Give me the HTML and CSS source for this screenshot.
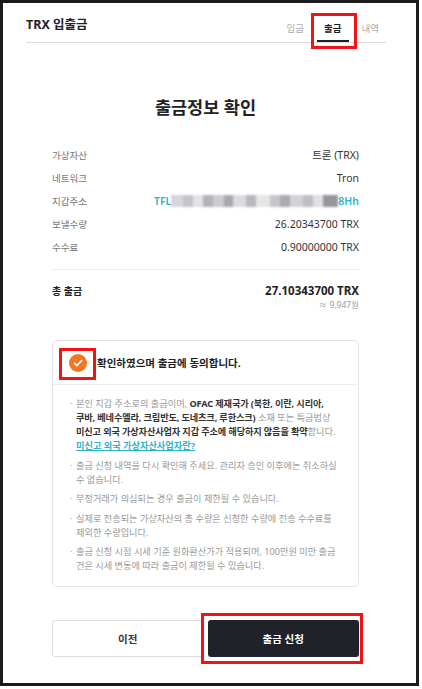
FILE: index.html
```html
<!DOCTYPE html>
<html lang="ko">
<head>
    <meta charset="UTF-8">
    <meta name="viewport" content="width=device-width, initial-scale=1.0">
    <title>TRX 입출금</title>
    <link rel="stylesheet" href="styles.css">
</head>
<body>

    <div class="frame">
        <!-- Header with tabs -->
        <header class="top">
            <h1 class="title">TRX 입출금</h1>
            <nav class="tabs">
                <a class="tab">입금</a>
                <a class="tab active">출금<span class="mark"></span></a>
                <a class="tab">내역</a>
            </nav>
        </header>

        <main class="confirm">
            <h2 class="heading">출금정보 확인</h2>

            <div class="rows">
                <div class="row"><span class="label">가상자산</span><span class="value">트론 (TRX)</span></div>
                <div class="row"><span class="label">네트워크</span><span class="value">Tron</span></div>
                <div class="row"><span class="label">지갑주소</span><span class="value addr">TFL<span class="blur"></span>8Hh</span></div>
                <div class="row"><span class="label">보낼수량</span><span class="value">26.20343700 TRX</span></div>
                <div class="row"><span class="label">수수료</span><span class="value">0.90000000 TRX</span></div>
            </div>

            <div class="total">
                <div class="total-row"><span>총 출금</span><span class="total-amount">27.10343700 TRX</span></div>
                <p class="krw">≈ 9,947원</p>
            </div>

            <!-- Agreement box -->
            <div class="agree">
                <div class="agree-head">
                    <span class="check">
                        <svg width="18" height="18" viewBox="0 0 18 18">
                            <circle cx="9" cy="9" r="9" fill="#f47522"/>
                            <polyline points="5.4,9.2 7.9,11.6 12.6,6.7" fill="none" stroke="#fff" stroke-width="1.7" stroke-linecap="round" stroke-linejoin="round"/>
                        </svg>
                        <span class="mark"></span>
                    </span>
                    확인하였으며 출금에 동의합니다.
                </div>
                <ul class="notes">
                    <li>본인 지갑 주소로의 출금이며, <b>OFAC 제재국가 (북한, 이란, 시리아,<br>쿠바, 베네수엘라, 크림반도, 도네츠크, 루한스크)</b> 소재 또는 특금법상<br><b>미신고 외국 가상자산사업자 지갑 주소에 해당하지 않음을 확약</b>합니다.
                        <a class="link">미신고 외국 가상자산사업자란?</a></li>
                    <li>출금 신청 내역을 다시 확인해 주세요. 관리자 승인 이후에는 취소하실<br>수 없습니다.</li>
                    <li>부정거래가 의심되는 경우 출금이 제한될 수 있습니다.</li>
                    <li>실제로 전송되는 가상자산의 총 수량은 신청한 수량에 전송 수수료를<br>제외한 수량입니다.</li>
                    <li>출금 신청 시점 시세 기준 원화환산가가 적용되며, 100만원 미만 출금<br>건은 시세 변동에 따라 출금이 제한될 수 있습니다.</li>
                </ul>
            </div>

            <div class="actions">
                <button class="btn btn-prev">이전</button>
                <button class="btn btn-submit">출금 신청<span class="mark"></span></button>
            </div>
        </main>
    </div>

</body>
</html>
```

FILE: styles.css
```css
body {
    margin: 0;
    background-color: #fff;
    font-family: "Noto Sans", "Noto Sans CJK KR", sans-serif;
    color: #333;
    word-break: keep-all;
}

/* Outer window frame */
.frame {
    position: relative;
    box-sizing: border-box;
    width: 419px;
    height: 686px;
    border: 3px solid #1b1b1b;
    padding: 0 30px 0 23px;
    background-color: #fff;
}

/* Red annotation boxes */
.mark {
    position: absolute;
    border: 3px solid #f01414;
    pointer-events: none;
}

/* Header */
.top {
    display: flex;
    justify-content: space-between;
    height: 39px;
    border-bottom: 1px solid #dcdcdc;
}

.title {
    margin: 13px 0 0;
    font-size: 12.5px;
    line-height: 18px;
    font-weight: 700;
    color: #1f2329;
}

.tabs {
    display: flex;
    align-self: flex-end;
    gap: 6px;
}

.tab {
    position: relative;
    padding: 0 7px 4px;
    font-size: 9.5px;
    line-height: 14px;
    color: #aaa;
    border-bottom: 2px solid transparent;
}

.tab.active {
    color: #222;
    font-weight: 700;
    border-bottom-color: #222;
}

.tab .mark {
    left: -6px;
    right: -8px;
    top: -9px;
    bottom: -9px;
}

/* Confirm section */
.confirm {
    padding: 0 27px 0 26px;
}

.heading {
    margin: 52px 0 24px;
    text-align: center;
    font-size: 17.5px;
    line-height: 24px;
    font-weight: 700;
    color: #222;
}

.rows {
    padding-bottom: 11px;
    border-bottom: 1px solid #ececec;
}

.row {
    display: flex;
    justify-content: space-between;
    align-items: center;
    height: 23px;
}

.label {
    font-size: 9.5px;
    color: #777;
}

.value {
    font-size: 10.5px;
    color: #333;
}

.addr {
    display: flex;
    align-items: center;
    color: #2fb3c6;
    font-weight: 600;
}

.blur {
    display: inline-block;
    width: 167px;
    height: 12px;
    filter: blur(0.9px);
    background: linear-gradient(90deg, #d6d7da 0 7%, #c4c5c9 7% 13%, #e3e3e6 13% 19%, #b1b3b8 19% 25%, #cbccd0 25% 32%, #a7a9ae 32% 37%, #dadbde 37% 45%, #b8b9be 45% 51%, #e6e6e8 51% 59%, #c5c6ca 59% 65%, #a9abb0 65% 71%, #d1d2d5 71% 79%, #bdbec2 79% 85%, #e1e1e4 85% 91%, #95979c 91% 100%);
}

/* Total */
.total {
    margin-top: 13px;
}

.total-row {
    display: flex;
    justify-content: space-between;
    align-items: center;
    line-height: 16px;
    font-size: 10px;
    font-weight: 700;
    color: #222;
}

.total-amount {
    font-size: 11.5px;
}

.krw {
    margin: 0;
    text-align: right;
    font-size: 8.5px;
    line-height: 12px;
    color: #999;
}

/* Agreement box */
.agree {
    margin-top: 29px;
    border: 1px solid #e4e4e4;
    border-radius: 5px;
}

.agree-head {
    display: flex;
    align-items: center;
    gap: 10px;
    height: 43px;
    padding-left: 16px;
    border-bottom: 1px solid #eee;
    font-size: 10.5px;
    font-weight: 700;
    color: #222;
}

.check {
    position: relative;
    display: flex;
}

.check .mark {
    left: -10px;
    right: -9px;
    top: -6px;
    bottom: -8px;
}

.notes {
    list-style: none;
    margin: 0;
    padding: 12px 6px 13px 23px;
    display: flex;
    flex-direction: column;
    gap: 5.5px;
}

.notes li {
    position: relative;
    font-size: 9.2px;
    line-height: 14px;
    color: #999;
    white-space: nowrap;
}

.notes li::before {
    content: "·";
    position: absolute;
    left: -6px;
    color: #aaa;
}

.notes b {
    color: #333;
    font-weight: 700;
    letter-spacing: -0.15px;
}

.link {
    display: block;
    color: #2fb3c6;
    font-weight: 700;
    text-decoration: underline;
}

/* Buttons */
.actions {
    display: grid;
    grid-template-columns: 1fr 1fr;
    gap: 4px;
    margin-top: 33px;
}

.btn {
    position: relative;
    height: 37px;
    border-radius: 3px;
    font-family: inherit;
    font-size: 10.5px;
    font-weight: 700;
    cursor: pointer;
}

.btn-prev {
    background-color: #fff;
    border: 1px solid #dcdcdc;
    color: #333;
}

.btn-submit {
    background-color: #1f2229;
    border: none;
    color: #fff;
}

.btn-submit .mark {
    left: -7px;
    right: -4px;
    top: -7px;
    bottom: -7px;
}
```
